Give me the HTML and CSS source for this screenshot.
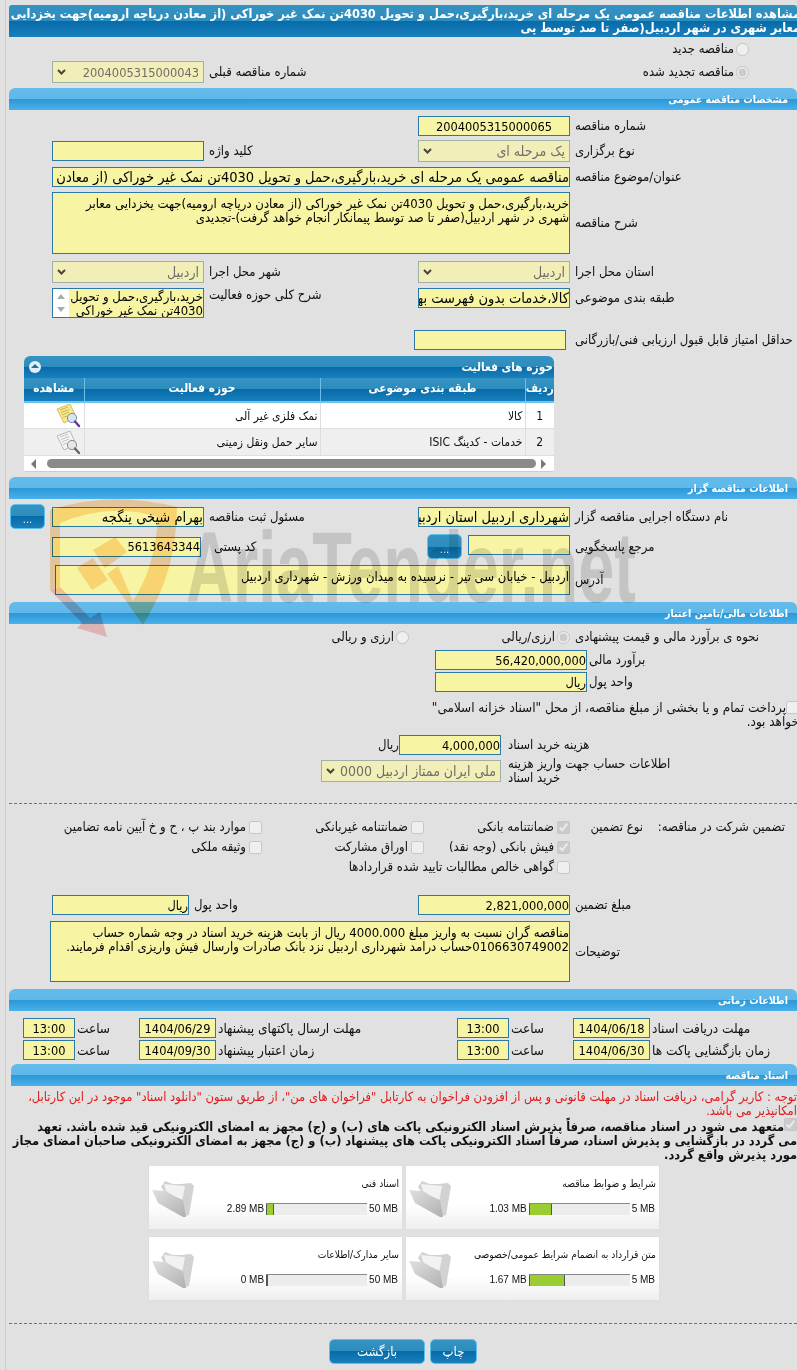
FILE: index.html
```html
<!DOCTYPE html>
<html lang="fa">
<head>
    <meta charset="UTF-8">
    <title>مشاهده اطلاعات مناقصه</title>
    <link rel="stylesheet" href="styles.css">
</head>
<body>

<div class="page">

    <!-- Title -->
    <h1 class="title"><span>مشاهده اطلاعات مناقصه عمومی یک مرحله ای خرید،بارگیری،حمل و تحویل 4030تن نمک غیر خوراکی (از معادن دریاچه ارومیه)جهت یخزدایی<br>معابر شهری در شهر اردبیل(صفر تا صد توسط پی</span></h1>

    <label class="radio-line mt-5"><input type="radio" disabled>مناقصه جدید</label>
    <div class="row mt-5 center">
        <div class="col-a">
            <select class="sel sel-num w-152" disabled><option>2004005315000043</option></select>
            <span class="lbl">شماره مناقصه قبلی</span>
        </div>
        <label class="radio-line push"><input type="radio" checked disabled>مناقصه تجدید شده</label>
    </div>

    <!-- General -->
    <h2 class="head mt-5">مشخصات مناقصه عمومی</h2>

    <div class="row mt-6">
        <div class="col-b">
            <input class="fld fld-num fld-c w-152" readonly value="2004005315000065">
            <span class="lbl">شماره مناقصه</span>
        </div>
    </div>
    <div class="row mt-4 center">
        <div class="col-a">
            <input class="fld w-152" readonly>
            <span class="lbl">کلید واژه</span>
        </div>
        <div class="col-b">
            <select class="sel w-152" disabled><option>یک مرحله ای</option></select>
            <span class="lbl">نوع برگزاری</span>
        </div>
    </div>
    <div class="row mt-5">
        <div class="col-wide">
            <input class="fld w-518" readonly value="مناقصه عمومی یک مرحله ای خرید،بارگیری،حمل و تحویل 4030تن نمک غیر خوراکی (از معادن دریاچه ارومیه)">
            <span class="lbl">عنوان/موضوع مناقصه</span>
        </div>
    </div>
    <div class="row mt-5 center">
        <div class="col-wide">
            <textarea class="fld txt w-518 h-62" wrap="off" readonly>خرید،بارگیری،حمل و تحویل 4030تن نمک غیر خوراکی (از معادن دریاچه ارومیه)جهت یخزدایی معابر
شهری در شهر اردبیل(صفر تا صد توسط پیمانکار انجام خواهد گرفت)-تجدیدی</textarea>
            <span class="lbl">شرح مناقصه</span>
        </div>
    </div>
    <div class="row mt-7 center">
        <div class="col-a">
            <select class="sel w-152" disabled><option>اردبیل</option></select>
            <span class="lbl">شهر محل اجرا</span>
        </div>
        <div class="col-b">
            <select class="sel w-152" disabled><option>اردبیل</option></select>
            <span class="lbl">استان محل اجرا</span>
        </div>
    </div>
    <div class="row mt-5">
        <div class="col-a col-top">
            <div class="fld listbox w-152">
                <div class="listbox-arrows"><i class="arr-up"></i><i class="arr-down"></i></div>
                <div class="listbox-text">خرید،بارگیری،حمل و تحویل<br>4030تن نمک غیر خوراکی</div>
            </div>
            <span class="lbl">شرح کلی حوزه فعالیت</span>
        </div>
        <div class="col-b">
            <input class="fld w-152" readonly value="کالا،خدمات بدون فهرست بها">
            <span class="lbl">طبقه بندی موضوعی</span>
        </div>
    </div>
    <div class="row mt-12">
        <div class="col-b">
            <input class="fld fld-score" readonly>
            <span class="lbl lbl-score">حداقل امتیاز قابل قبول ارزیابی فنی/بازرگانی</span>
        </div>
    </div>

    <!-- Activity table -->
    <div class="panel mt-6">
        <div class="panel-head">
            <span>حوزه های فعالیت</span>
            <span class="toggle"><i></i></span>
        </div>
        <table class="grid">
            <thead>
                <tr>
                    <th class="c-num">ردیف</th>
                    <th class="c-cat">طبقه بندی موضوعی</th>
                    <th class="c-act">حوزه فعالیت</th>
                    <th>مشاهده</th>
                </tr>
            </thead>
            <tbody>
                <tr>
                    <td class="num">1</td>
                    <td>کالا</td>
                    <td>نمک فلزی غیر آلی</td>
                    <td class="view">
                        <svg width="26" height="24" viewBox="0 0 26 24"><path d="M2 5 15 0l6 13-12 6z" fill="#f7e98e" stroke="#c9b04a" stroke-width=".8"/><path d="M5 6l8-3M6 8.500l8-3M7 11l7-3M8 13.500l4-1.500" stroke="#b59b3a" stroke-width=".7"/><circle cx="17" cy="14" r="4.600" fill="#d5e6f2" stroke="#7a8aa0"/><path d="M20 17.500l4 4.500" stroke="#5b3f8f" stroke-width="2.400" stroke-linecap="round"/></svg>
                    </td>
                </tr>
                <tr>
                    <td class="num">2</td>
                    <td>خدمات - کدینگ ISIC</td>
                    <td>سایر حمل ونقل زمینی</td>
                    <td class="view">
                        <svg width="26" height="24" viewBox="0 0 26 24"><path d="M2 5 15 0l6 13-12 6z" fill="#f4f4f4" stroke="#aaa" stroke-width=".8"/><path d="M5 6l8-3M6 8.500l8-3M7 11l7-3M8 13.500l4-1.500" stroke="#aaa" stroke-width=".7"/><circle cx="17" cy="14" r="4.600" fill="#e6e6e6" stroke="#8a8a8a"/><path d="M20 17.500l4 4.500" stroke="#666" stroke-width="2.400" stroke-linecap="round"/></svg>
                    </td>
                </tr>
            </tbody>
        </table>
        <div class="hscroll">
            <i class="arr-left"></i>
            <div class="thumb"></div>
            <i class="arr-right"></i>
        </div>
    </div>

    <!-- Organizer -->
    <h2 class="head mt-6">اطلاعات مناقصه گزار</h2>

    <div class="row mt-5 center">
        <button class="btn btn-more">...</button>
        <div class="col-a col-a-tight">
            <input class="fld w-152" readonly value="بهرام شیخی ینگجه">
            <span class="lbl">مسئول ثبت مناقصه</span>
        </div>
        <div class="col-b">
            <input class="fld w-152" readonly value="شهرداری اردبیل استان اردبیل">
            <span class="lbl">نام دستگاه اجرایی مناقصه گزار</span>
        </div>
    </div>
    <div class="row mt-5 center">
        <div class="col-a col-a-ref">
            <input class="fld fld-num w-149" readonly value="5613643344">
            <span class="lbl lbl-post">کد پستی</span>
        </div>
        <div class="col-ref">
            <button class="btn btn-more">...</button>
            <input class="fld w-102" readonly>
            <span class="lbl">مرجع پاسخگویی</span>
        </div>
    </div>
    <div class="row mt-6 center">
        <div class="col-addr">
            <textarea class="fld txt w-515 h-30" wrap="off" readonly>اردبیل - خیابان سی تیر - نرسیده به میدان ورزش - شهرداری اردبیل</textarea>
            <span class="lbl">آدرس</span>
        </div>
    </div>

    <!-- Finance -->
    <h2 class="head mt-7">اطلاعات مالی/تامین اعتبار</h2>

    <div class="row mt-6">
        <label class="opt opt-b"><input type="radio" disabled>ارزی و ریالی</label>
        <label class="opt opt-a"><input type="radio" checked disabled>ارزی/ریالی</label>
        <span class="lbl">نحوه ی برآورد مالی و قیمت پیشنهادی</span>
    </div>
    <div class="row mt-6">
        <div class="col-money">
            <input class="fld fld-num w-152" readonly value="56,420,000,000">
            <span class="lbl lbl-tight">برآورد مالی</span>
        </div>
    </div>
    <div class="row mt-2">
        <div class="col-money">
            <input class="fld fld-num w-152" readonly value="ریال">
            <span class="lbl lbl-tight">واحد پول</span>
        </div>
    </div>
    <p class="treasury"><input type="checkbox" disabled>پرداخت تمام و یا بخشی از مبلغ مناقصه، از محل "اسناد خزانه اسلامی"<br>خواهد بود.</p>
    <div class="row mt-6">
        <div class="col-cost">
            <span class="unit">ریال</span>
            <input class="fld fld-num w-102" readonly value="4,000,000">
            <span class="lbl lbl-cost">هزینه خرید اسناد</span>
        </div>
    </div>
    <div class="row mt-5 center">
        <div class="col-account">
            <select class="sel w-180" disabled><option>ملی ایران ممتاز اردبیل 0000</option></select>
            <span class="lbl lbl-cost">اطلاعات حساب جهت واریز هزینه<br>خرید اسناد</span>
        </div>
    </div>

    <hr class="dash dash-a">

    <!-- Guarantee -->
    <div class="guarantee">
        <span class="g-title">تضمین شرکت در مناقصه:</span>
        <span>نوع تضمین</span>
        <label class="chk"><input type="checkbox" checked disabled>ضمانتنامه بانکی</label>
        <label class="chk"><input type="checkbox" disabled>ضمانتنامه غیربانکی</label>
        <label class="chk"><input type="checkbox" disabled>موارد بند پ ، ح و خ آیین نامه تضامین</label>

        <label class="chk g-start"><input type="checkbox" checked disabled>فیش بانکی (وجه نقد)</label>
        <label class="chk"><input type="checkbox" disabled>اوراق مشارکت</label>
        <label class="chk"><input type="checkbox" disabled>وثیقه ملکی</label>

        <label class="chk g-start g-wide"><input type="checkbox" disabled>گواهی خالص مطالبات تایید شده قراردادها</label>
    </div>

    <div class="row mt-18">
        <div class="col-a">
            <input class="fld fld-num w-137" readonly value="ریال">
            <span class="lbl">واحد پول</span>
        </div>
        <div class="col-b">
            <input class="fld fld-num w-152" readonly value="2,821,000,000">
            <span class="lbl">مبلغ تضمین</span>
        </div>
    </div>
    <div class="row mt-6 center">
        <div class="col-notes">
            <textarea class="fld txt w-520 h-61" wrap="off" readonly>مناقصه گران نسبت به واریز مبلغ 4000.000 ریال از بابت هزینه خرید اسناد در وجه شماره حساب
0106630749002حساب درامد شهرداری اردبیل نزد بانک صادرات وارسال فیش واریزی اقدام فرمایند.</textarea>
            <span class="lbl">توضیحات</span>
        </div>
    </div>

    <!-- Dates -->
    <h2 class="head mt-7">اطلاعات زمانی</h2>

    <div class="times mt-7">
        <input class="fld fld-num fld-c" readonly value="13:00">
        <span class="lbl lbl-tight">ساعت</span>
        <input class="fld fld-num fld-c" readonly value="1404/06/29">
        <span class="lbl lbl-tight">مهلت ارسال پاکتهای پیشنهاد</span>
        <input class="fld fld-num fld-c" readonly value="13:00">
        <span class="lbl lbl-tight">ساعت</span>
        <input class="fld fld-num fld-c" readonly value="1404/06/18">
        <span class="lbl lbl-tight">مهلت دریافت اسناد</span>
    </div>
    <div class="times mt-2">
        <input class="fld fld-num fld-c" readonly value="13:00">
        <span class="lbl lbl-tight">ساعت</span>
        <input class="fld fld-num fld-c" readonly value="1404/09/30">
        <span class="lbl lbl-tight">زمان اعتبار پیشنهاد</span>
        <input class="fld fld-num fld-c" readonly value="13:00">
        <span class="lbl lbl-tight">ساعت</span>
        <input class="fld fld-num fld-c" readonly value="1404/06/30">
        <span class="lbl lbl-tight">زمان بازگشایی پاکت ها</span>
    </div>

    <!-- Documents -->
    <h2 class="head head-docs mt-4">اسناد مناقصه</h2>

    <p class="notice">توجه : کاربر گرامی، دریافت اسناد در مهلت قانونی و پس از افزودن فراخوان به کارتابل "فراخوان های من"، از طریق ستون "دانلود اسناد" موجود در این کارتابل،<br>امکانپذیر می باشد.</p>
    <p class="pledge"><input type="checkbox" checked disabled>متعهد می شود در اسناد مناقصه، صرفاً پذیرش اسناد الکترونیکی پاکت های (ب) و (ج) مجهز به امضای الکترونیکی قید شده باشد. تعهد<br>می گردد در بازگشایی و پذیرش اسناد، صرفاً اسناد الکترونیکی پاکت های پیشنهاد (ب) و (ج) مجهز به امضای الکترونیکی صاحبان امضای مجاز<br>مورد پذیرش واقع گردد.</p>

    <div class="docs">
        <div class="doc">
            <div class="doc-body">
                <div class="doc-title">شرایط و ضوابط مناقصه</div>
                <div class="doc-meter"><span>5 MB</span><div class="bar"><div class="bar-fill" style="width:21%"></div></div><span>1.03 MB</span></div>
            </div>
            <svg class="folder" viewBox="0 0 44 38"><use href="#folder"/></svg>
        </div>
        <div class="doc">
            <div class="doc-body">
                <div class="doc-title">اسناد فنی</div>
                <div class="doc-meter"><span>50 MB</span><div class="bar"><div class="bar-fill" style="width:6%"></div></div><span>2.89 MB</span></div>
            </div>
            <svg class="folder" viewBox="0 0 44 38"><use href="#folder"/></svg>
        </div>
        <div class="doc">
            <div class="doc-body">
                <div class="doc-title">متن قرارداد به انضمام شرایط عمومی/خصوصی</div>
                <div class="doc-meter"><span>5 MB</span><div class="bar"><div class="bar-fill" style="width:34%"></div></div><span>1.67 MB</span></div>
            </div>
            <svg class="folder" viewBox="0 0 44 38"><use href="#folder"/></svg>
        </div>
        <div class="doc">
            <div class="doc-body">
                <div class="doc-title">سایر مدارک/اطلاعات</div>
                <div class="doc-meter"><span>50 MB</span><div class="bar"><div class="bar-fill" style="width:0"></div></div><span>0 MB</span></div>
            </div>
            <svg class="folder" viewBox="0 0 44 38"><use href="#folder"/></svg>
        </div>
    </div>

    <hr class="dash dash-b">

    <div class="actions">
        <button class="btn btn-back">بازگشت</button>
        <button class="btn btn-print">چاپ</button>
    </div>
</div>

<!-- Shared folder shape -->
<svg class="defs" width="0" height="0">
    <defs>
        <linearGradient id="folder-front" x1="0" y1="0" x2="1" y2="1">
            <stop offset="0" stop-color="#e0e0e0"/>
            <stop offset="1" stop-color="#b0b0b0"/>
        </linearGradient>
        <g id="folder">
            <path d="M10 8 14 2l8 3 8 0 10-1 3 3-5 29-3 1-14-14z" fill="#d2d2d2"/>
            <path d="M13 5l21 2-4 21-12-6z" fill="#f2f2f2"/>
            <path d="M1 11l14 1 8 5 9 4 3 17-3 0-9-5-16-9-5-11z" fill="url(#folder-front)"/>
        </g>
    </defs>
</svg>

<!-- Site watermark -->
<svg class="watermark" width="620" height="160" viewBox="0 0 620 160">
    <path d="M10 20Q70 0 137 17C136 60 128 95 103 135L92 112C108 90 116 60 118 27Q70 12 20 33L20 97 10 100z" fill="#ffdeae"/>
    <path d="M10 100 20 97 50 128 60 122 67 147 37 138 42 133z" fill="#f8ccca"/>
    <path d="M37 78 53 68 68 90 52 100zM53 60 75 47 87 62 65 78zM67 84 78 76 103 135z" fill="#ffdeae"/>
    <text class="wm-text" x="146" y="112" textLength="450" lengthAdjust="spacingAndGlyphs">AriaTender.net</text>
</svg>

</body>
</html>
```

FILE: styles.css
```css
/* General */
html, body {
    margin: 0;
    padding: 0;
    height: 1370px;
    overflow: hidden;
}

body {
    position: relative;
    width: 797px;
    background-color: #e1e1e1;
    font-family: "DejaVu Sans Condensed", "DejaVu Sans", sans-serif;
    font-size: 13px;
    line-height: 14px;
    color: #111;
}

.page {
    width: 788px;
    height: 1370px;
    margin-left: 5px;
    padding: 5px 0 0 3px;
    border-left: 1px solid #cfcfcf;
    overflow: hidden;
    direction: rtl;
}

/* Headers */
.title {
    height: 32px;
    margin: 0;
    padding: 2px 0 0;
    box-sizing: border-box;
    background: linear-gradient(#3593c3, #2c8cbc 50%, #066ba8 50%, #1a80bd);
    border-radius: 3px 3px 0 0;
    color: #fff;
    font-size: 12.700px;
    line-height: 14px;
    font-weight: bold;
    white-space: nowrap;
    overflow: hidden;
}

.title span {
    display: block;
    margin-right: -3px;
}

.head {
    height: 22px;
    margin: 0;
    padding: 4px 9px 0 0;
    box-sizing: border-box;
    background: linear-gradient(#63bbeb, #5fb8e9 50%, #2b97d8 50%, #49b0ea);
    border-radius: 6px 6px 0 0;
    color: #fff;
    font-size: 10.500px;
    line-height: 15px;
    font-weight: bold;
}

.head-docs {
    margin-left: 2px;
}

/* Form rows */
.row {
    display: flex;
    direction: ltr;
    align-items: flex-start;
}

.center {
    align-items: center;
}

.col-a, .col-b, .col-wide, .col-ref, .col-addr, .col-money, .col-cost, .col-account, .col-notes {
    display: flex;
    align-items: center;
}

.col-top { align-items: flex-start; }

.col-a { width: 366px; margin-left: 43px; }
.col-b { margin-left: 409px; }
.col-a + .col-b { margin-left: 0; }
.col-wide { margin-left: 43px; }
.col-a-tight { margin-left: 7px; }
.col-a-ref { width: 375px; margin-left: 43px; }
.col-ref .btn { margin-right: 6px; }
.col-ref .fld { margin-bottom: 4px; }
.col-addr { margin-left: 46px; }
.col-money { margin-left: 426px; }
.col-cost { margin-left: 371px; }
.col-account { height: 22px; margin-left: 312px; }
.col-notes { margin-left: 41px; }

.lbl {
    direction: rtl;
    text-align: left;
    padding-left: 5px;
    white-space: nowrap;
}

.lbl-tight { padding-left: 2px; }
.lbl-post { padding-left: 13px; }
.lbl-score { padding-left: 9px; }
.lbl-cost { padding-left: 7px; }

.unit {
    width: 19px;
    direction: rtl;
}

.fld {
    height: 20px;
    margin: 0;
    padding: 0;
    box-sizing: border-box;
    border: 1px solid #2b79a6;
    border-radius: 0;
    background-color: #f7f4a3;
    color: #000;
    font: 14.500px/14px "DejaVu Sans Condensed", "DejaVu Sans", sans-serif;
    direction: rtl;
    text-align: right;
    outline: none;
}

.fld-c { text-align: center; }
.fld-num { font-size: 12.700px; }
.fld-score { width: 152px; margin-left: -4px; }

.txt {
    display: block;
    resize: none;
    overflow: hidden;
    padding-top: 4px;
    font-size: 13px;
}

.sel {
    appearance: none;
    height: 22px;
    margin: 0;
    padding: 0 4px 0 14px;
    border: 1px solid #9fb0a6;
    border-radius: 0;
    background: #f1eeb7 url("data:image/svg+xml,%3Csvg xmlns='http://www.w3.org/2000/svg' width='9' height='6'%3E%3Cpath d='M1 1l3.500 3.500L8 1' fill='none' stroke='%23444' stroke-width='2'/%3E%3C/svg%3E") no-repeat 4px center;
    color: #6e6e6e;
    opacity: 1;
    font: 14px "DejaVu Sans Condensed", "DejaVu Sans", sans-serif;
    direction: rtl;
}

.sel-num { font-size: 12.700px; }

.w-102 { width: 102px; }
.w-137 { width: 137px; }
.w-149 { width: 149px; }
.w-152 { width: 152px; }
.w-180 { width: 180px; }
.w-515 { width: 515px; }
.w-518 { width: 518px; }
.w-520 { width: 520px; }
.h-30 { height: 30px; }
.h-61 { height: 61px; }
.h-62 { height: 62px; }

input[type="radio"], input[type="checkbox"] {
    width: 13px;
    height: 13px;
    margin: 0;
    flex: none;
}

.radio-line {
    display: flex;
    align-items: center;
    gap: 2px;
    height: 14px;
    padding-right: 48px;
    white-space: nowrap;
}

.radio-line.push {
    margin-left: auto;
    direction: rtl;
}

/* Small list box */
.listbox {
    display: flex;
    height: 30px;
    padding: 0;
    overflow: hidden;
    font-size: 13px;
}

.listbox-text {
    flex: 1;
    padding-top: 1px;
    white-space: nowrap;
}

.listbox-arrows {
    order: 2;
    flex: none;
    width: 16px;
    background-color: #fff;
    display: flex;
    flex-direction: column;
    align-items: center;
    justify-content: space-between;
    padding: 5px 0;
    box-sizing: border-box;
}

.arr-up, .arr-down, .arr-left, .arr-right {
    display: block;
    width: 0;
    height: 0;
    border-style: solid;
}

.arr-up { border-width: 0 4px 5px; border-color: transparent transparent #aaa; }
.arr-down { border-width: 5px 4px 0; border-color: #aaa transparent transparent; }
.arr-left { border-width: 5px 5px 5px 0; border-color: transparent #777 transparent transparent; }
.arr-right { border-width: 5px 0 5px 5px; border-color: transparent transparent transparent #777; }

/* Activity table */
.panel {
    width: 530px;
    margin: 0 auto 0 15px;
    background-color: #fff;
    border-radius: 6px 6px 2px 2px;
    overflow: hidden;
    direction: rtl;
    box-shadow: 0 1px #b9d3e3;
}

.panel-head {
    display: flex;
    justify-content: space-between;
    align-items: center;
    height: 22px;
    padding: 0 1px 0 5px;
    background: linear-gradient(#3593c3, #2c8cbc 50%, #066ba8 50%, #1a80bd);
    color: #fff;
    font-size: 11.800px;
    font-weight: bold;
}

.toggle {
    display: flex;
    justify-content: center;
    width: 12px;
    height: 12px;
    border-radius: 50%;
    background-color: #e4eef5;
}

.toggle i {
    width: 0;
    height: 0;
    margin-top: 3px;
    border-style: solid;
    border-width: 0 4px 4px;
    border-color: transparent transparent #1c6f9f;
}

.grid {
    width: 100%;
    border-collapse: collapse;
    table-layout: fixed;
}

.grid th {
    height: 24px;
    padding: 0 0 4px;
    background: linear-gradient(#3593c3, #2c8cbc 50%, #066ba8 50%, #1a80bd);
    border-left: 1px solid #6cc0e8;
    border-bottom: 2px solid #6ac6f0;
    color: #fff;
    font-size: 11.800px;
    font-weight: bold;
    box-sizing: border-box;
}

.grid th:last-child { border-left: 0; }

.c-num { width: 29px; }
.c-cat { width: 205px; }
.c-act { width: 236px; }

.grid td {
    height: 26px;
    padding: 0 2px;
    border-left: 1px solid #dedede;
    border-bottom: 1px solid #dedede;
    box-sizing: border-box;
    font-size: 12px;
}

.grid td:last-child { border-left: 0; }
.grid tbody tr:nth-child(2) td { height: 27px; background-color: #efefef; }
.grid .num { text-align: center; }
.grid .view { padding: 1px 0 0; }

.view svg { display: block; margin-right: 3px; }

.hscroll {
    display: flex;
    align-items: center;
    height: 15px;
    padding: 0 7px;
    direction: ltr;
    background-color: #fff;
}

.thumb {
    width: 489px;
    height: 9px;
    margin: 0 5px 0 11px;
    border-radius: 5px;
    background-color: #8a8a8a;
}

/* Buttons */
.btn {
    height: 25px;
    padding: 0;
    border: 1px solid #5cc0ef;
    border-radius: 5px;
    background: linear-gradient(#3593c3, #2c8cbc 50%, #066ba8 50%, #1a80bd);
    color: #fff;
    font: 13px "DejaVu Sans Condensed", "DejaVu Sans", sans-serif;
    cursor: pointer;
}

.btn-more {
    width: 35px;
    font-size: 11px;
    padding-top: 7px;
    line-height: 10px;
}

.row > .btn-more { margin-left: 1px; }

/* Finance */
.opt {
    display: flex;
    align-items: center;
    gap: 2px;
    direction: rtl;
    white-space: nowrap;
}

.opt-b { width: 76px; margin-left: 324px; }
.opt-a { width: 161px; }

.treasury {
    margin: 9px -2px 0 0;
    white-space: nowrap;
    font-size: 13.400px;
}

.treasury input {
    vertical-align: top;
}

.dash {
    height: 0;
    margin: 0;
    border: 0;
    border-top: 1px dashed #3a7fa5;
}

.dash-a { margin-top: 21px; }
.dash-b { margin-top: 23px; }

/* Guarantee */
.guarantee {
    display: grid;
    grid-template-columns: 154px 73px 146px 162px 1fr;
    grid-auto-rows: 20px;
    align-items: center;
    margin-top: 13px;
}

.g-title { padding-right: 12px; white-space: nowrap; }
.g-start { grid-column-start: 3; }
.g-wide { grid-column-end: 6; }

.chk {
    display: flex;
    align-items: center;
    gap: 3px;
    white-space: nowrap;
}

/* Dates */
.times {
    display: grid;
    grid-template-columns: 52px 64px 77px 241px 52px 64px 77px 1fr;
    direction: ltr;
    align-items: center;
    margin-left: 14px;
    font-size: 13.500px;
}

.times .fld { width: 100%; }

/* Documents */
.notice {
    margin: 4px 0 0;
    color: #e11b1b;
    white-space: nowrap;
    font-size: 12.840px;
}

.pledge {
    margin: 2px 0 0;
    font-weight: bold;
    white-space: nowrap;
    font-size: 12.730px;
}

.pledge input {
    vertical-align: top;
    margin-top: -2px;
}

.docs {
    display: grid;
    grid-template-columns: 253px 253px;
    gap: 8px 4px;
    width: 510px;
    margin: 4px auto 0 140px;
}

.doc {
    display: flex;
    justify-content: space-between;
    height: 63px;
    background: linear-gradient(#fff 60%, #efefef);
    box-shadow: 0 0 1px #cfcfcf;
}

.doc-body {
    padding: 11px 3px 0 0;
    font-size: 10.200px;
}

.doc-title {
    white-space: nowrap;
}

.doc-meter {
    display: flex;
    align-items: center;
    gap: 2px;
    margin-top: 11px;
    padding-right: 1px;
    white-space: nowrap;
    font-family: "Liberation Sans", sans-serif;
    font-size: 10px;
}

.doc-meter span {
    direction: ltr;
}

.bar {
    width: 101px;
    height: 12px;
    box-sizing: border-box;
    border-top: 1px solid #888;
    background-color: #ececec;
    direction: ltr;
}

.bar-fill {
    height: 11px;
    border-left: 1px solid #555;
    border-right: 1px solid #555;
    background-color: #9acd32;
}

.folder {
    flex: none;
    width: 44px;
    height: 38px;
    margin: 13px 0 0 2px;
}

.defs { position: absolute; }

.actions {
    display: flex;
    direction: ltr;
    gap: 5px;
    margin: 15px 0 0 320px;
}

.btn-back { width: 96px; }
.btn-print { width: 47px; }

/* Watermark */
.watermark {
    position: absolute;
    left: 40px;
    top: 490px;
    mix-blend-mode: multiply;
    pointer-events: none;
}

.wm-text {
    font-family: "Liberation Sans", sans-serif;
    font-size: 100px;
    font-weight: bold;
    fill: #dedede;
}

/* Spacing helpers, last so they win over the margin: 0 above */
.mt-2 { margin-top: 2px; }
.mt-4 { margin-top: 4px; }
.mt-5 { margin-top: 5px; }
.mt-6 { margin-top: 6px; }
.mt-7 { margin-top: 7px; }
.mt-12 { margin-top: 12px; }
.mt-18 { margin-top: 18px; }
```
